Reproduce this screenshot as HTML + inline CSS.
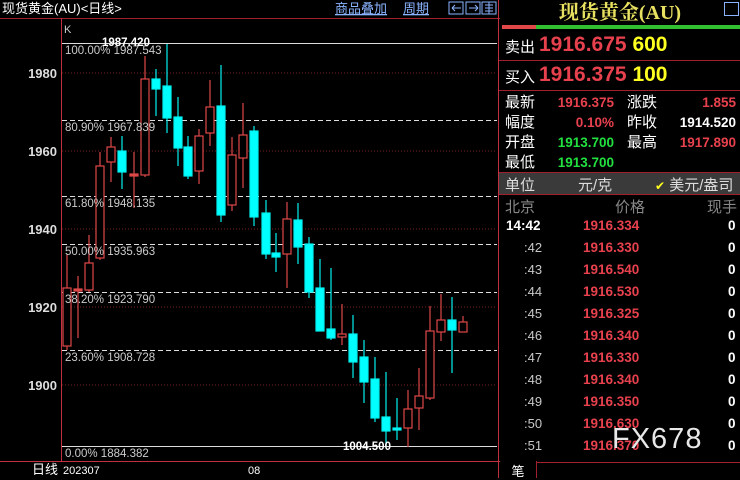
<!DOCTYPE html>
<html><head><meta charset="utf-8"><style>
body{margin:0;width:740px;height:478px;background:#000;overflow:hidden;font-family:"Liberation Sans","Noto Sans CJK SC",sans-serif;position:relative}
.a{position:absolute;white-space:nowrap}
.r{color:#e8414e}.y{color:#ffff20}.g{color:#22e040}.w{color:#fff}.gr{color:#c8c8c8}
.big{font-size:21px;font-weight:bold}
.lab{font-size:15px;color:#fff}
.num{font-size:13.5px;font-weight:bold}
.row{position:absolute;left:500px;width:240px;height:22px;font-size:13px}
</style></head><body>
<svg class="a" style="left:0;top:0" width="500" height="478">
<g font-family="Liberation Sans,Noto Sans CJK SC,sans-serif">
<text x="2" y="13" fill="#fff" font-size="13">现货黄金(AU)&lt;日线&gt;</text>
<text x="335" y="13" fill="#8ab4ff" font-size="13" text-decoration="underline">商品叠加</text>
<text x="403" y="13" fill="#8ab4ff" font-size="13" text-decoration="underline">周期</text>
<rect x="449" y="2" width="14" height="12" fill="none" stroke="#8ab4ff"/><rect x="466" y="2" width="14" height="12" fill="none" stroke="#8ab4ff"/><rect x="482" y="2" width="14" height="12" fill="none" stroke="#8ab4ff"/>
<path d="M452 8h9M452 8l3-3M452 8l3 3M469 8h9M478 8l-3-3M478 8l-3 3M485 5h8M485 8h8M485 11h8M489 2v12" stroke="#8ab4ff" fill="none"/>
<line x1="0" y1="18.5" x2="500" y2="18.5" stroke="#a02030"/>
<line x1="61.5" y1="18" x2="61.5" y2="461" stroke="#c03040"/>
<line x1="0" y1="461.5" x2="500" y2="461.5" stroke="#c03040"/>
<line x1="498.5" y1="0" x2="498.5" y2="478" stroke="#c03040"/>
<text x="64" y="33" fill="#ccc" font-size="11">K</text>
<g stroke="#7a2020" stroke-dasharray="1,2"><line x1="62" y1="73" x2="497" y2="73"/><line x1="62" y1="151" x2="497" y2="151"/><line x1="62" y1="229" x2="497" y2="229"/><line x1="62" y1="307" x2="497" y2="307"/><line x1="62" y1="385" x2="497" y2="385"/></g>
<g font-size="13" font-weight="bold" fill="#ddd" text-anchor="end"><text x="57" y="78">1980</text><text x="57" y="156">1960</text><text x="57" y="234">1940</text><text x="57" y="312">1920</text><text x="57" y="390">1900</text></g>
<line x1="62" y1="43.5" x2="497" y2="43.5" stroke="#ddd"/>
<line x1="62" y1="446.5" x2="497" y2="446.5" stroke="#ddd"/>
<g stroke="#ddd" stroke-dasharray="5,3"><line x1="62" y1="120.5" x2="497" y2="120.5"/><line x1="62" y1="196.5" x2="497" y2="196.5"/><line x1="62" y1="244.5" x2="497" y2="244.5"/><line x1="62" y1="292.5" x2="497" y2="292.5"/><line x1="62" y1="350.5" x2="497" y2="350.5"/></g>
<text x="32" y="474" fill="#fff" font-size="13">日线</text>
<text x="63" y="474" fill="#fff" font-size="11">202307</text>
<text x="248" y="474" fill="#fff" font-size="11">08</text>
<g stroke="#e04848" fill="#000" stroke-width="1.2">
<line x1="67" y1="255" x2="67" y2="350"/><rect x="63" y="288" width="8" height="58"/>
<line x1="78" y1="276" x2="78" y2="338"/><rect x="74" y="289" width="8" height="2" fill="#e04848"/>
<line x1="89" y1="235" x2="89" y2="292"/><rect x="85" y="263" width="8" height="27"/>
<line x1="100" y1="152" x2="100" y2="260"/><rect x="96" y="166" width="8" height="92"/>
<line x1="111" y1="137" x2="111" y2="182"/><rect x="107" y="147" width="8" height="15"/>
<line x1="134" y1="152" x2="134" y2="208"/><rect x="130" y="174" width="8" height="2" fill="#e04848"/>
<line x1="145" y1="56" x2="145" y2="177"/><rect x="141" y="79" width="8" height="96"/>
<line x1="199" y1="129" x2="199" y2="184"/><rect x="195" y="136" width="8" height="35"/>
<line x1="210" y1="80" x2="210" y2="146"/><rect x="206" y="107" width="8" height="26"/>
<line x1="232" y1="137" x2="232" y2="211"/><rect x="228" y="155" width="8" height="50"/>
<line x1="243" y1="103" x2="243" y2="188"/><rect x="239" y="135" width="8" height="23"/>
<line x1="287" y1="202" x2="287" y2="288"/><rect x="283" y="219" width="8" height="35"/>
<line x1="342" y1="304" x2="342" y2="345"/><rect x="338" y="334" width="8" height="3"/>
<line x1="408" y1="390" x2="408" y2="447"/><rect x="404" y="409" width="8" height="19"/>
<line x1="419" y1="368" x2="419" y2="430"/><rect x="415" y="396" width="8" height="12"/>
<line x1="430" y1="306" x2="430" y2="400"/><rect x="426" y="331" width="8" height="67"/>
<line x1="441" y1="294" x2="441" y2="341"/><rect x="437" y="320" width="8" height="12"/>
<line x1="463" y1="316" x2="463" y2="332"/><rect x="459" y="322" width="8" height="10"/>
</g>
<g stroke="#00f0f0" fill="#00ffff" stroke-width="1.2">
<line x1="122" y1="136" x2="122" y2="189"/><rect x="118" y="151" width="8" height="21"/>
<line x1="156" y1="69" x2="156" y2="116"/><rect x="152" y="79" width="8" height="10"/>
<line x1="167" y1="44" x2="167" y2="133"/><rect x="163" y="86" width="8" height="32"/>
<line x1="178" y1="97" x2="178" y2="166"/><rect x="174" y="117" width="8" height="31"/>
<line x1="188" y1="136" x2="188" y2="179"/><rect x="184" y="147" width="8" height="29"/>
<line x1="221" y1="65" x2="221" y2="222"/><rect x="217" y="106" width="8" height="109"/>
<line x1="254" y1="126" x2="254" y2="226"/><rect x="250" y="131" width="8" height="86"/>
<line x1="266" y1="200" x2="266" y2="259"/><rect x="262" y="213" width="8" height="41"/>
<line x1="276" y1="233" x2="276" y2="272"/><rect x="272" y="253" width="8" height="4"/>
<line x1="298" y1="203" x2="298" y2="264"/><rect x="294" y="220" width="8" height="27"/>
<line x1="309" y1="237" x2="309" y2="298"/><rect x="305" y="244" width="8" height="48"/>
<line x1="320" y1="259" x2="320" y2="331"/><rect x="316" y="288" width="8" height="43"/>
<line x1="331" y1="268" x2="331" y2="340"/><rect x="327" y="329" width="8" height="9"/>
<line x1="353" y1="315" x2="353" y2="378"/><rect x="349" y="334" width="8" height="28"/>
<line x1="364" y1="340" x2="364" y2="403"/><rect x="360" y="357" width="8" height="25"/>
<line x1="375" y1="357" x2="375" y2="422"/><rect x="371" y="379" width="8" height="39"/>
<line x1="386" y1="372" x2="386" y2="447"/><rect x="382" y="417" width="8" height="14"/>
<line x1="397" y1="398" x2="397" y2="440"/><rect x="393" y="428" width="8" height="2"/>
<line x1="452" y1="297" x2="452" y2="373"/><rect x="448" y="320" width="8" height="10"/>
</g>
<g fill="#ccc" font-size="11.5"><text x="65" y="54">100.00% 1987.543</text><text x="65" y="131">80.90% 1967.839</text><text x="65" y="207">61.80% 1948.135</text><text x="65" y="255">50.00% 1935.963</text><text x="65" y="303">38.20% 1923.790</text><text x="65" y="361">23.60% 1908.728</text><text x="65" y="457">0.00% 1884.382</text>
<text x="102" y="46" font-weight="bold" fill="#fff">1987.420</text><text x="343" y="450" font-weight="bold" fill="#fff">1004.500</text></g>
</g></svg>

<div class="a" style="left:500px;top:0;width:240px;height:24px;text-align:center;font-family:'Liberation Serif','Noto Serif CJK SC',serif;font-size:20px;font-weight:bold;color:#e8e060;line-height:26px">现货黄金(AU)</div>
<div class="a" style="left:724px;top:2px;width:13px;height:12px;border:1px solid #8ab4ff"></div>
<div class="a" style="left:502px;top:25px;width:34px;height:4px;background:#e04848"></div>
<div class="a" style="left:536px;top:25px;width:204px;height:4px;background:#30c030"></div>
<div class="a" style="left:499px;top:60px;width:241px;height:1px;background:#a02030"></div>
<div class="a" style="left:499px;top:90px;width:241px;height:1px;background:#a02030"></div>
<div class="a lab" style="left:505px;top:36px">卖出</div>
<div class="a big" style="left:539px;top:33px"><span class="r">1916.675</span> <span class="y">600</span></div>
<div class="a lab" style="left:505px;top:66px">买入</div>
<div class="a big" style="left:539px;top:63px"><span class="r">1916.375</span> <span class="y">100</span></div>
<div class="a lab" style="left:505px;top:93px;line-height:20px">最新<br>幅度<br>开盘<br>最低</div>
<div class="a num" style="left:540px;top:93px;width:74px;text-align:right;line-height:20px"><span class="r">1916.375</span><br><span class="r">0.10%</span><br><span class="g">1913.700</span><br><span class="g">1913.700</span></div>
<div class="a lab" style="left:627px;top:93px;line-height:20px">涨跌<br>昨收<br>最高</div>
<div class="a num" style="left:660px;top:93px;width:76px;text-align:right;line-height:20px"><span class="r">1.855</span><br><span class="w">1914.520</span><br><span class="r">1917.890</span></div>
<div class="a" style="left:499px;top:172px;width:241px;height:21px;background:#3a3a3a;border-top:1px solid #a02030;border-bottom:1px solid #a02030"></div>
<div class="a lab" style="left:505px;top:174px;color:#ddd">单位</div>
<div class="a lab" style="left:578px;top:174px;color:#ddd">元/克</div>
<div class="a lab" style="left:655px;top:174px;color:#ddd"><span class="y" style="font-size:12px">✔</span> 美元/盎司</div>
<div class="a lab" style="left:505px;top:196px;color:#888">北京</div>
<div class="a lab" style="left:615px;top:196px;color:#888">价格</div>
<div class="a lab" style="left:707px;top:196px;color:#888">现手</div>
<div class="row" style="top:218px"><span class="a w num" style="left:6px">14:42</span><span class="a r num" style="left:83px">1916.334</span><span class="a w num" style="left:228px">0</span></div>
<div class="row" style="top:240px"><span class="a gr" style="left:24px">:42</span><span class="a r num" style="left:83px">1916.330</span><span class="a w num" style="left:228px">0</span></div>
<div class="row" style="top:262px"><span class="a gr" style="left:24px">:43</span><span class="a r num" style="left:83px">1916.540</span><span class="a w num" style="left:228px">0</span></div>
<div class="row" style="top:284px"><span class="a gr" style="left:24px">:44</span><span class="a r num" style="left:83px">1916.530</span><span class="a w num" style="left:228px">0</span></div>
<div class="row" style="top:306px"><span class="a gr" style="left:24px">:45</span><span class="a r num" style="left:83px">1916.325</span><span class="a w num" style="left:228px">0</span></div>
<div class="row" style="top:328px"><span class="a gr" style="left:24px">:46</span><span class="a r num" style="left:83px">1916.340</span><span class="a w num" style="left:228px">0</span></div>
<div class="row" style="top:350px"><span class="a gr" style="left:24px">:47</span><span class="a r num" style="left:83px">1916.330</span><span class="a w num" style="left:228px">0</span></div>
<div class="row" style="top:372px"><span class="a gr" style="left:24px">:48</span><span class="a r num" style="left:83px">1916.340</span><span class="a w num" style="left:228px">0</span></div>
<div class="row" style="top:394px"><span class="a gr" style="left:24px">:49</span><span class="a r num" style="left:83px">1916.350</span><span class="a w num" style="left:228px">0</span></div>
<div class="row" style="top:416px"><span class="a gr" style="left:24px">:50</span><span class="a r num" style="left:83px">1916.630</span><span class="a w num" style="left:228px">0</span></div>
<div class="row" style="top:438px"><span class="a gr" style="left:24px">:51</span><span class="a r num" style="left:83px">1916.370</span><span class="a w num" style="left:228px">0</span></div>
<div class="a" style="left:612px;top:423px;font-size:29px;color:#e8e8e8;letter-spacing:1px">FX678</div>
<div class="a" style="left:537px;top:462px;width:203px;height:1px;background:#a02030"></div>
<div class="a" style="left:500px;top:461px;width:36px;height:17px;border-right:1px solid #a02030;color:#fff;font-size:13px;text-align:center">笔</div>
</body></html>
